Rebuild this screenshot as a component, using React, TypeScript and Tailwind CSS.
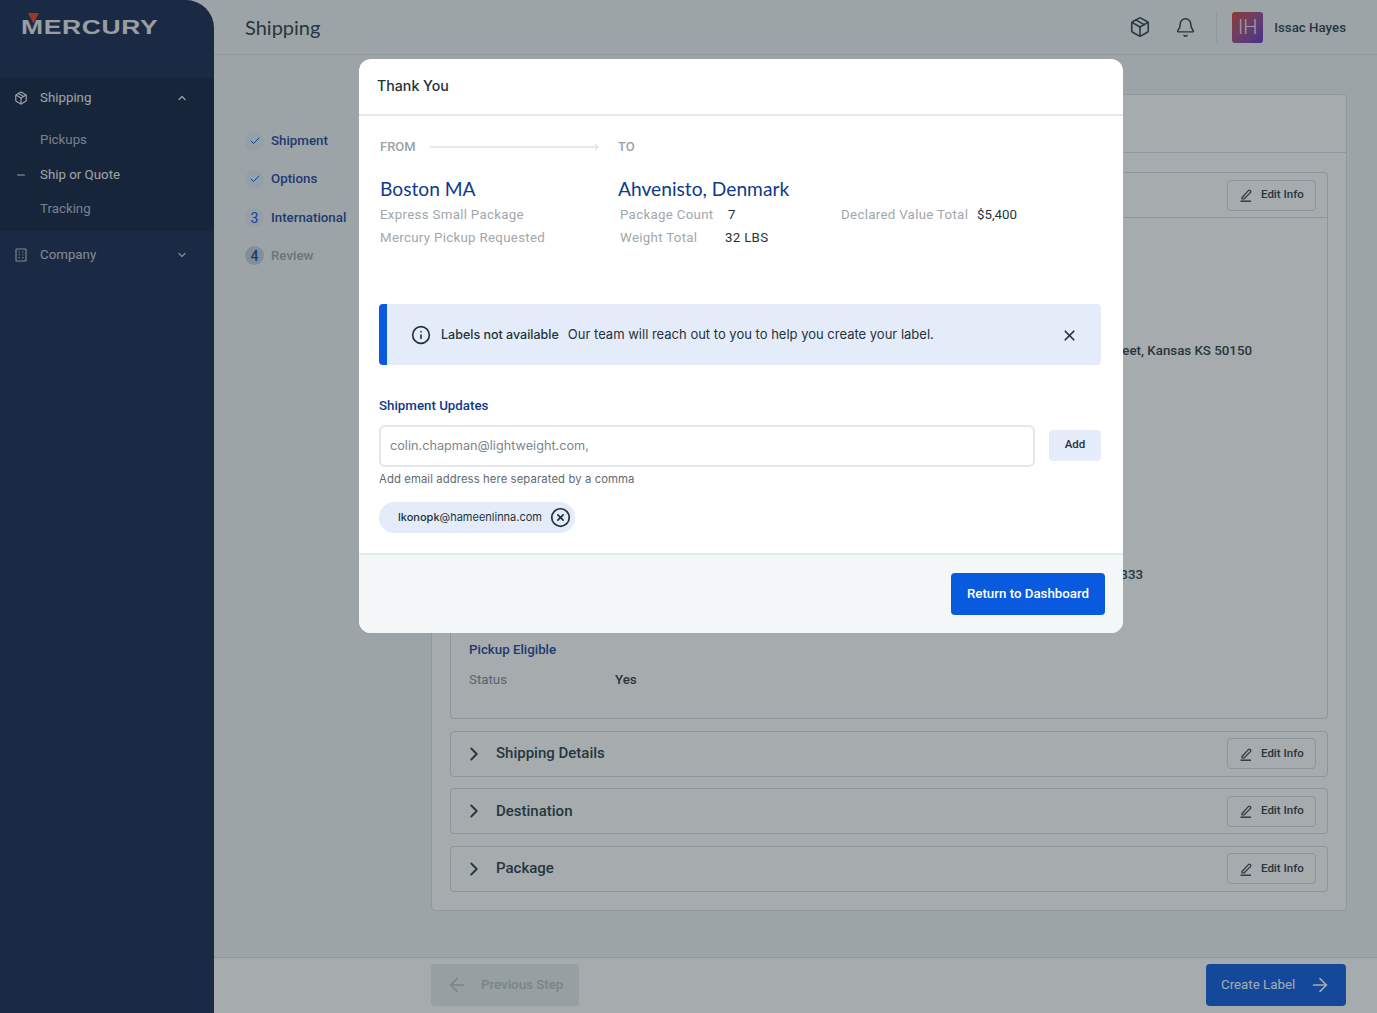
import {
  ArrowLeft,
  ArrowRight,
  Bell,
  Check,
  ChevronDown,
  ChevronRight,
  ChevronUp,
  CircleX,
  Info,
  Minus,
  Package,
  X,
} from "lucide-react";

const roboto = "font-['Roboto',sans-serif]";
const inter = "font-['Inter',sans-serif]";
const heading = "font-['Lato',sans-serif]";

// Pencil sitting on a line, used by all the Edit Info buttons
function EditIcon() {
  return (
    <svg width="14" height="14" viewBox="0 0 14 14" fill="none" stroke="currentColor" strokeWidth="1.2">
      <path d="M3 9.5 9.6 2.4a1 1 0 0 1 1.4 0l.6.6a1 1 0 0 1 0 1.4L5 11H3z" strokeLinejoin="round" />
      <path d="M1.5 13.2h10.5" strokeWidth="1.4" />
    </svg>
  );
}

function CompanyIcon() {
  return (
    <svg width="12" height="14" viewBox="0 0 12 14" fill="none" stroke="currentColor" strokeWidth="1.1">
      <rect x="1" y="1" width="10" height="12" rx="0.5" />
      <path d="M3.6 4h1.2M7.2 4h1.2M3.6 6.8h1.2M7.2 6.8h1.2M3.6 9.6h1.2M7.2 9.6h1.2" />
    </svg>
  );
}

function EditButton() {
  return (
    <button className="flex h-[31px] w-[89px] shrink-0 items-center gap-[8px] rounded border border-[#d5dde0] pl-[11px] text-[11.5px] font-medium text-[#2a3d47]">
      <EditIcon />
      Edit Info
    </button>
  );
}

function CollapsedRow({ title }: { title: string }) {
  return (
    <div className="flex h-[46px] items-center justify-between rounded border border-[#d5dde0] pl-[12px] pr-[11px]">
      <div className="flex items-center gap-[11px]">
        <ChevronRight size={22} strokeWidth={2} className="text-[#2a3d47]" />
        <span className="text-[15px] font-medium text-[#2a3d47]">{title}</span>
      </div>
      <EditButton />
    </div>
  );
}

function Step({ mark, label, active }: { mark: React.ReactNode; label: string; active: boolean }) {
  return (
    <div className="flex h-[19px] items-center gap-[7px]">
      <div
        className={`flex h-[19px] w-[19px] items-center justify-center rounded-full text-sm text-[#0a4fc4] ${
          active ? "bg-[#e2ebf5]" : "bg-[#c4d0dc] font-medium text-[#1b449d]"
        }`}
      >
        {mark}
      </div>
      <span className={`text-[13.3px] font-medium ${active ? "text-[#1b449d]" : "text-[#9aa6ac]"}`}>{label}</span>
    </div>
  );
}

function Sidebar() {
  return (
    <aside className="z-10 flex w-[214px] shrink-0 flex-col rounded-tr-[28px] bg-[#172850]">
      {/* logo */}
      <div className="h-[78px] pl-[21px] pt-[12px]">
        <div className="relative h-[26px] w-[137px]">
          <span className="absolute left-0 top-[2px] origin-left scale-x-[1.26] font-['Liberation_Sans',sans-serif] text-[21px] font-bold leading-[26px] tracking-[0.5px] text-[#e8e9ea]">
            MERCURY
          </span>
          <svg className="absolute left-[7px] top-[1px]" width="11" height="11" viewBox="0 0 11 11">
            <path d="M0 0h11L5.5 10.5z" fill="#e8412a" />
          </svg>
        </div>
      </div>

      <div className="h-[153px] bg-[#122040] text-[13.3px]">
        <div className="flex h-[40px] items-center pl-[14px] pr-[26px] text-[#f0f1f3]">
          <Package size={14} />
          <span className="ml-[12px] flex-1">Shipping</span>
          <ChevronUp size={12} strokeWidth={2.4} />
        </div>
        <div className="pt-[5px]">
          <div className="flex h-[34.5px] items-center pl-[40px] text-[#b4bac7]">Pickups</div>
          <div className="flex h-[34.5px] items-center pl-[16px] text-[#f0f1f3]">
            <Minus size={10} strokeWidth={2} className="scale-x-[1.2]" />
            <span className="ml-[14px]">Ship or Quote</span>
          </div>
          <div className="flex h-[34.5px] items-center pl-[40px] text-[#b4bac7]">Tracking</div>
        </div>
      </div>

      <div className="flex h-[47px] items-center pl-[15px] pr-[26px] text-[13.3px] text-[#c6cad3]">
        <CompanyIcon />
        <span className="ml-[13px] flex-1">Company</span>
        <ChevronDown size={12} strokeWidth={2.4} />
      </div>
    </aside>
  );
}

function Header() {
  return (
    <header className="flex h-[55px] shrink-0 items-center justify-between border-b border-[#d8e0e3] bg-[#eff3f4] pl-[31px] pr-[31px]">
      <h1 className={`${heading} text-xl text-[#2a3d47]`}>Shipping</h1>
      <div className="flex items-center text-[#2a3d47]">
        <Package size={22} strokeWidth={1.7} />
        <Bell size={21} strokeWidth={1.7} className="ml-[24px]" />
        <div className="ml-[20px] h-[31px] w-px bg-[#d8e0e3]" />
        <div className="ml-[15px] flex h-[31px] w-[31px] items-center justify-center rounded-[3px] bg-gradient-to-br from-[#d2422a] to-[#6728cb] text-xl font-light text-[#f5e9ee]">
          IH
        </div>
        <span className="ml-[11px] mt-px text-[13.3px] font-medium">Issac Hayes</span>
      </div>
    </header>
  );
}

function ShippingCard() {
  return (
    <section className="flex h-[817px] w-[916px] flex-col rounded border border-[#d8e0e3] bg-white">
      <div className="h-[58px] shrink-0 border-b border-[#d8e0e3]" />
      <div className="flex flex-col gap-[11.5px] px-[18px] pt-[19px]">
        <div className="h-[547px] rounded border border-[#d5dde0]">
          <div className="flex h-[45px] items-center justify-end border-b border-[#d5dde0] pr-[11px]">
            <EditButton />
          </div>
          <div className="h-[500px] px-[18px] text-[13.3px] text-[#2a3d47]">
            <p className="pr-[57px] pt-[123px] text-right font-medium">Main Street, Kansas KS 50150</p>
            <p className="pr-[166px] pt-[204px] text-right font-medium">+1 555 333 3333</p>
            <h3 className="pt-[55px] font-medium text-[#1b449d]">Pickup Eligible</h3>
            <div className="mt-[10px] flex">
              <span className="w-[146px] text-[#7c8a91]">Status</span>
              <span className="font-medium">Yes</span>
            </div>
          </div>
        </div>
        <CollapsedRow title="Shipping Details" />
        <CollapsedRow title="Destination" />
        <CollapsedRow title="Package" />
      </div>
    </section>
  );
}

function Footer() {
  return (
    <footer className="flex h-[56px] shrink-0 items-start justify-between border-t border-[#d8e0e3] bg-white pl-[217px] pr-[31px] pt-[6px] text-[13.3px] font-medium">
      <button className="flex h-[42px] w-[148px] items-center gap-[13px] rounded bg-[#e4ebeb] pl-[15px] text-[#b6c0c3]">
        <ArrowLeft size={22} strokeWidth={1.8} />
        Previous Step
      </button>
      <button className="flex h-[42px] w-[140px] items-center gap-[14px] rounded bg-[#0a5adf] pl-[15px] font-normal text-white">
        Create Label
        <ArrowRight size={22} strokeWidth={1.8} />
      </button>
    </footer>
  );
}

function ThankYouModal() {
  return (
    <div className="absolute left-[359px] top-[59px] flex h-[574px] w-[764px] flex-col overflow-hidden rounded-xl bg-white">
      <div className={`${inter} flex h-[57px] shrink-0 items-center border-b-2 border-[#e6eaee] pb-[2px] pl-[18px] text-[14.2px] font-medium text-[#24333b]`}>
        Thank You
      </div>

      <div className="flex-1 pl-[20px] pr-[22px]">
        <div className="mt-[22px] flex h-[18px] items-center pl-[1px] text-[13px] font-medium text-[#9aa3a8]">
          <span className="w-[50px]">FROM</span>
          <svg width="170" height="10" viewBox="0 0 170 10" fill="none" stroke="#cfd5d9" strokeWidth="1">
            <path d="M0 5h168M165 2l3 3-3 3" />
          </svg>
          <span className="ml-[18px]">TO</span>
        </div>

        <div className="mt-[20px] flex pl-[1px]">
          <div className="w-[238px]">
            <h2 className={`${heading} h-[25px] text-[19.2px] leading-[25px] text-[#0f3a8a]`}>Boston MA</h2>
            <p className="mt-[2px] h-[23px] text-[13.3px] leading-[23px] tracking-[0.3px] text-[#9fa7ab]">Express Small Package</p>
            <p className="h-[23px] text-[13.3px] leading-[23px] tracking-[0.3px] text-[#9fa7ab]">Mercury Pickup Requested</p>
          </div>
          <div>
            <h2 className={`${heading} h-[25px] text-[19.2px] leading-[25px] text-[#0f3a8a]`}>Ahvenisto, Denmark</h2>
            <div className="mt-[2px] flex h-[23px] pl-[2px] text-[13.3px] leading-[23px] tracking-[0.3px]">
              <span className="w-[108px] text-[#9fa7ab]">Package Count</span>
              <span className="w-[113px] text-[#24333b]">7</span>
              <span className="w-[136px] text-[#9fa7ab]">Declared Value Total</span>
              <span className="tracking-normal text-[#24333b]">$5,400</span>
            </div>
            <div className="flex h-[23px] pl-[2px] text-[13.3px] leading-[23px] tracking-[0.3px]">
              <span className="w-[105px] text-[#9fa7ab]">Weight Total</span>
              <span className="text-[#24333b]">32 LBS</span>
            </div>
          </div>
        </div>

        {/* labels warning */}
        <div className={`${inter} mt-[55px] flex h-[61px] items-center rounded border-l-8 border-[#0a5adf] bg-[#e4ecfa] pl-[24px] pr-[23px] pt-px text-[13px] text-[#24333b]`}>
          <Info size={20} strokeWidth={2} className="shrink-0" />
          <span className="ml-[10px] text-[12.5px] font-medium">Labels not available</span>
          <span className="ml-[9px] flex-1">Our team will reach out to you to help you create your label.</span>
          <X size={17} strokeWidth={2.4} className="shrink-0" />
        </div>

        <h3 className={`${roboto} mt-[32px] text-[13.3px] font-medium leading-[18px] text-[#0f3a8a]`}>Shipment Updates</h3>
        <div className="mt-[10px] flex items-center">
          <div className={`${inter} flex h-[42px] w-[656px] items-center rounded-md border-2 border-[#e3e6ea] pl-[9px] text-[12.7px] text-[#7e868c]`}>
            colin.chapman@lightweight.com,
          </div>
          <button className="mb-[2px] ml-[14px] h-[31px] w-[52px] rounded bg-[#e6edfa] text-[11.5px] font-medium text-[#24333b]">Add</button>
        </div>
        <p className={`${inter} mt-[5px] text-[11.3px] leading-[15px] tracking-[0.1px] text-[#5f6a70]`}>
          Add email address here separated by a comma
        </p>
        <div className="mt-[15px] flex h-[31px] w-[196px] items-center rounded-full bg-[#e4ecfa] pl-[19px] text-[#24333b]">
          <span className={`${inter} whitespace-nowrap text-[11px]`}>
            <span className="font-medium">lkonopk</span>@hameenlinna.com
          </span>
          <CircleX size={21} strokeWidth={2} className="ml-[8px] shrink-0" />
        </div>
      </div>

      <div className="flex h-[80px] shrink-0 items-start justify-end border-t-2 border-[#e6eaee] bg-[#f4f7f8] pr-[18px] pt-[18px]">
        <button className="h-[42px] w-[154px] rounded bg-[#0a5adf] text-[13.3px] font-medium text-white">Return to Dashboard</button>
      </div>
    </div>
  );
}

export default function App() {
  return (
    <div className={`${roboto} relative flex h-screen w-full overflow-hidden bg-[#eff3f4]`}>
      <Sidebar />

      <main className="flex min-w-0 flex-1 flex-col">
        <Header />
        <div className="flex flex-1 pl-[31px] pt-[39px]">
          <div className="flex w-[186px] shrink-0 flex-col gap-[19.3px] pt-[37.5px]">
            <Step active mark={<Check size={12} strokeWidth={2} />} label="Shipment" />
            <Step active mark={<Check size={12} strokeWidth={2} />} label="Options" />
            <Step active mark="3" label="International" />
            <Step active={false} mark="4" label="Review" />
          </div>
          <ShippingCard />
        </div>
        <Footer />
      </main>

      {/* dimmed backdrop */}
      <div className="absolute inset-0 z-20 bg-[#202d34]/40" />
      <div className="absolute inset-0 z-30">
        <ThankYouModal />
      </div>
    </div>
  );
}
